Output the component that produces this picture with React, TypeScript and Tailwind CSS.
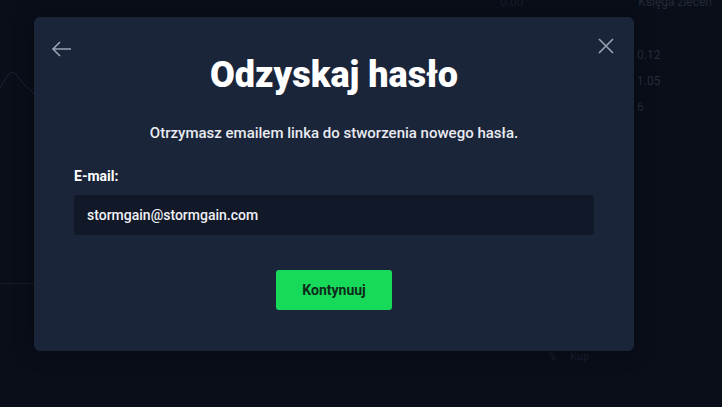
export default function App() {
  return (
    <div className="relative h-[407px] w-[722px] overflow-hidden bg-[#0a0e19] font-['Roboto',sans-serif]">
      {/* faint trading screen behind the overlay */}
      <div className="absolute right-[10px] top-[-5px] text-[12px] leading-[14px] text-[#232a38]">Księga zleceń</div>
      <div className="absolute left-[500px] top-[-5px] text-[12px] leading-[14px] text-[#171c28]">0.00</div>
      <div className="absolute left-[637px] top-[47px] flex flex-col gap-[10px] text-[12px] leading-[16px] text-[#262d3b]">
        <span>0.12</span>
        <span>1.05</span>
        <span>6</span>
      </div>
      <div className="absolute left-[548px] top-[349px] flex gap-[14px] text-[11px] text-[#1a2030]">
        <span>%</span>
        <span>Kup</span>
      </div>
      <div className="absolute left-0 top-[283px] h-px w-[34px] bg-[#141a26]" />
      <svg className="absolute left-0 top-[60px]" width="34" height="40" viewBox="0 0 34 40">
        <path d="M0 28 L6 18 L11 12 L16 14 L22 22 L30 30 L34 34" fill="none" stroke="#1c2231" strokeWidth="1" />
      </svg>

      <div className="relative pl-[34px] pt-[17px]">
        <div className="flex h-[334px] w-[600px] flex-col items-center rounded-[6px] bg-[#1b2539] px-[40px] pt-[20px] shadow-[0_0_20px_rgba(0,0,0,0.4)]">
          <div className="flex w-full items-start justify-between">
            <button className="-ml-[24px] mt-[2px] text-[#9aa3b5]">
              <svg width="24" height="20" viewBox="0 0 24 20" fill="none" stroke="currentColor" strokeWidth="1.6">
                <path d="M21 10H3M10 3L3 10l7 7" />
              </svg>
            </button>
            <button className="-mr-[21px] text-[#9aa3b5]">
              <svg width="18" height="18" viewBox="0 0 18 18" fill="none" stroke="currentColor" strokeWidth="1.6">
                <path d="M2 2l14 14M16 2L2 16" />
              </svg>
            </button>
          </div>
          <h1 className="-mt-[7px] text-[36px] font-black leading-[46px] text-white">Odzyskaj hasło</h1>
          <p className="mt-[26px] text-[15px] font-medium leading-[18px] text-[#e8ebf1]">
            Otrzymasz emailem linka do stworzenia nowego hasła.
          </p>
          <div className="mt-[25px] w-full">
            <label className="block text-[14px] font-bold leading-[18px] text-white">E-mail:</label>
            <div className="mt-[10px] flex h-[40px] w-full items-center rounded-[3px] bg-[#111828] px-[13px] text-[14px] font-medium text-[#eef0f4]">
              stormgain@stormgain.com
            </div>
          </div>
          <button className="mt-[35px] h-[40px] w-[116px] rounded-[3px] bg-[#17d95a] text-[14px] font-bold text-[#0f2a1b]">
            Kontynuuj
          </button>
        </div>
      </div>
    </div>
  );
}
